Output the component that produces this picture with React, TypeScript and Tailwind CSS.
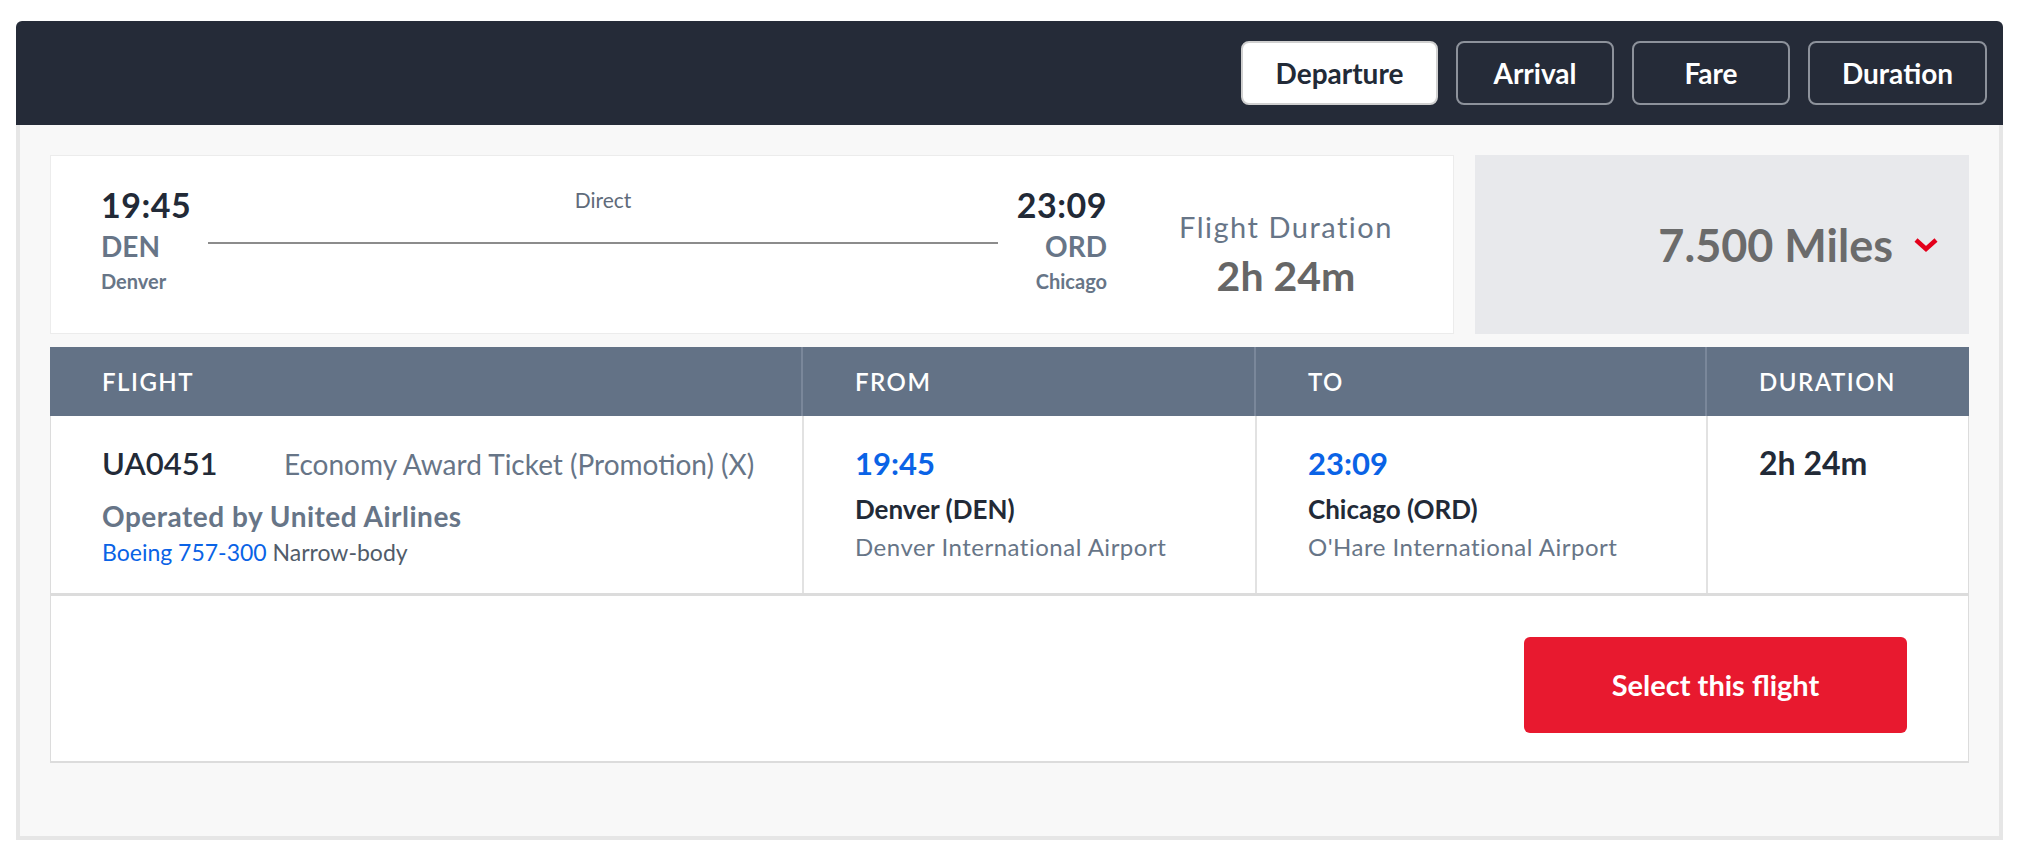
const font = "font-['Lato','Liberation_Sans',sans-serif]"

const sortButtons = [
  { label: 'Departure', width: 'w-[197px]', active: true },
  { label: 'Arrival', width: 'w-[158px]', active: false },
  { label: 'Fare', width: 'w-[158px]', active: false },
  { label: 'Duration', width: 'w-[179px]', active: false },
]

function Chevron() {
  return (
    <svg width="26" height="16" viewBox="0 0 26 16" fill="none">
      <polyline points="3,3 13,12 23,3" stroke="#e3001b" strokeWidth="4.5" strokeLinejoin="miter" />
    </svg>
  )
}

function SummaryCard() {
  return (
    <div className="flex-1 bg-white border border-[#ececec] flex items-start pl-[50px] pr-[52px] pt-[30px]">
      <div className="w-[91px] flex flex-col">
        <span className="text-[34px] leading-[38px] tracking-[0.5px] font-bold text-[#222a37]">19:45</span>
        <span className="mt-[6px] text-[28px] leading-[32px] font-bold text-[#677587]">DEN</span>
        <span className="mt-[7px] text-[20px] leading-[24px] font-bold text-[#677587]">Denver</span>
      </div>
      <div className="flex-1 mx-[16px] flex flex-col items-center">
        <span className="mt-[2px] text-[21px] leading-[24px] text-[#5f6b7a]">Direct</span>
        <div className="mt-[30px] h-[2px] w-full bg-[#8c8c8c]" />
      </div>
      <div className="w-[93px] flex flex-col items-end">
        <span className="text-[34px] leading-[38px] tracking-[0.5px] font-bold text-[#222a37]">23:09</span>
        <span className="mt-[6px] text-[28px] leading-[32px] font-bold text-[#677587]">ORD</span>
        <span className="mt-[7px] text-[20px] leading-[24px] font-bold text-[#677587]">Chicago</span>
      </div>
      <div className="w-[230px] ml-[64px] mt-[24px] flex flex-col items-center">
        <span className="text-[29px] leading-[34px] tracking-[1.5px] text-[#677587] whitespace-nowrap">Flight Duration</span>
        <span className="mt-[9px] text-[41px] leading-[46px] font-bold text-[#666666]">2h 24m</span>
      </div>
    </div>
  )
}

function FareBox() {
  return (
    <div className="w-[494px] bg-[#e8e9ec] flex items-center justify-end pr-[30px]">
      <span className="text-[45px] leading-[52px] font-bold text-[#6b6b6b]">7.500 Miles</span>
      <span className="ml-[20px] flex">
        <Chevron />
      </span>
    </div>
  )
}

const headCell = 'flex items-center pl-[52px] text-[24px] font-semibold tracking-[1.5px] text-white uppercase'
const airportText = 'mt-[10px] text-[24px] leading-[26px] tracking-[0.5px] text-[#677587] whitespace-nowrap'

function FlightTable() {
  return (
    <div className="mt-[13px]">
      <div className="grid grid-cols-[753px_453px_451px_1fr] h-[69px] bg-[#637286]">
        <div className={`${headCell} border-r-2 border-[#7a879a]`}>Flight</div>
        <div className={`${headCell} border-r-2 border-[#7a879a]`}>From</div>
        <div className={`${headCell} border-r-2 border-[#7a879a]`}>To</div>
        <div className={headCell}>Duration</div>
      </div>
      <div className="grid grid-cols-[753px_453px_451px_1fr] h-[180px] bg-white border-x border-b-[3px] border-[#dcdcdc]">
        <div className="pl-[51px] pt-[29px] border-r-2 border-[#e2e2e2] flex flex-col">
          <div className="flex items-baseline">
            <span className="w-[182px] text-[31px] leading-[36px] font-semibold text-[#222a37]">UA0451</span>
            <span className="text-[28px] leading-[36px] text-[#677587] whitespace-nowrap">
              Economy Award Ticket (Promotion) (X)
            </span>
          </div>
          <span className="mt-[18px] text-[28px] leading-[32px] tracking-[0.5px] font-bold text-[#677587] whitespace-nowrap">
            Operated by United Airlines
          </span>
          <span className="mt-[7px] text-[23px] leading-[26px] whitespace-nowrap">
            <span className="text-[#0a63e6]">Boeing 757-300</span>{' '}
            <span className="text-[#515c6a]">Narrow-body</span>
          </span>
        </div>
        <div className="pl-[51px] pt-[29px] border-r-2 border-[#e2e2e2] flex flex-col">
          <span className="text-[31px] leading-[36px] font-bold text-[#0a63e6]">19:45</span>
          <span className="mt-[13px] text-[26px] leading-[30px] font-bold text-[#222a37]">Denver (DEN)</span>
          <span className={airportText}>Denver International Airport</span>
        </div>
        <div className="pl-[51px] pt-[29px] border-r-2 border-[#e2e2e2] flex flex-col">
          <span className="text-[31px] leading-[36px] font-bold text-[#0a63e6]">23:09</span>
          <span className="mt-[13px] text-[26px] leading-[30px] font-bold text-[#222a37]">Chicago (ORD)</span>
          <span className={airportText}>O'Hare International Airport</span>
        </div>
        <div className="pl-[51px] pt-[29px] flex flex-col">
          <span className="text-[32px] leading-[36px] font-bold text-[#222a37]">2h 24m</span>
        </div>
      </div>
      <div className="h-[167px] bg-white border-x border-b-2 border-[#dcdcdc] flex justify-end items-start pt-[41px] pr-[61px]">
        <button
          type="button"
          className="w-[383px] h-[96px] rounded-[6px] bg-[#e8192f] text-white text-[29px] font-bold"
        >
          Select this flight
        </button>
      </div>
    </div>
  )
}

export default function App() {
  return (
    <div className={`${font} w-full h-[857px] bg-white pt-[21px] pl-[16px]`}>
      <div className="w-[1987px]">
        <div className="h-[104px] rounded-t-[6px] bg-[#252b38] flex items-center justify-end gap-[18px] pr-[16px]">
          {sortButtons.map(btn => (
            <button
              key={btn.label}
              type="button"
              className={
                btn.active
                  ? `${btn.width} h-[64px] rounded-[8px] bg-white border-2 border-[#d0d0d0] text-[#222a37] text-[28px] font-bold`
                  : `${btn.width} h-[64px] rounded-[8px] border-2 border-[#8d929b] text-white text-[28px] font-bold`
              }
            >
              {btn.label}
            </button>
          ))}
        </div>
        <div className="bg-[#f8f8f8] border-x-4 border-b-4 border-[#e6e6e6] px-[30px] pt-[30px] pb-[73px]">
          <div className="flex gap-[21px] h-[179px]">
            <SummaryCard />
            <FareBox />
          </div>
          <FlightTable />
        </div>
      </div>
    </div>
  )
}
